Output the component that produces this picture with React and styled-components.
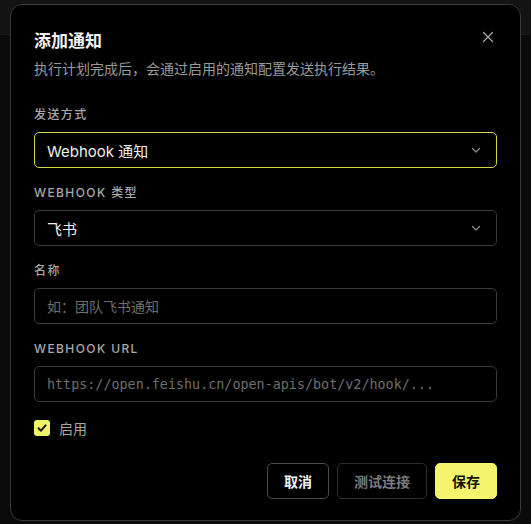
import styled, { createGlobalStyle } from 'styled-components';

const GlobalStyle = createGlobalStyle`
	html, body {
		margin: 0;
		padding: 0;
		background: #0b0b0b;
		font-family: Inter, "Noto Sans CJK SC", sans-serif;
		-webkit-font-smoothing: antialiased;
	}
	* { box-sizing: border-box; }
`;

const Page = styled.div`
	position: relative;
	width: 531px;
	height: 524px;
	overflow: hidden;
`;

const TopBar = styled.div`
	height: 35px;
	background: #131313;
	border-bottom: 1px solid #1a1a1a;
`;

const Dialog = styled.div`
	position: absolute;
	left: 10px;
	top: 4px;
	width: 511px;
	height: 517px;
	background: #000;
	border: 1px solid #3a3a3a;
	border-radius: 12px;
	padding: 23px 23px 21px;
	display: flex;
	flex-direction: column;
`;

const Header = styled.div`
	position: relative;
	margin-bottom: 28px;
`;

const Title = styled.h2`
	margin: 0;
	font-size: 17px;
	line-height: 26px;
	font-weight: 700;
	color: #f2f2f2;
`;

const Subtitle = styled.p`
	margin: 5px 0 0;
	font-size: 14px;
	line-height: 20px;
	color: #9a9a9a;
`;

const Close = styled.button`
	position: absolute;
	right: 0;
	top: 0;
	width: 18px;
	height: 18px;
	padding: 0;
	border: none;
	background: none;
	color: #a8a8a8;
	display: flex;
	align-items: center;
	justify-content: center;
`;

const Fields = styled.div`
	display: flex;
	flex-direction: column;
	gap: 17px;
`;

const Field = styled.div`
	display: flex;
	flex-direction: column;
	gap: 9px;
`;

const Label = styled.label`
	font-size: 12px;
	line-height: 16px;
	font-weight: 500;
	letter-spacing: 1.4px;
	color: #a9a9a9;
	text-transform: uppercase;
`;

const Box = styled.div`
	height: 36px;
	flex: none;
	border: 1px solid ${(p) => (p.$focused ? '#d6d645' : '#3a3a3a')};
	border-radius: 5px;
	padding: 0 14px 0 12px;
	display: flex;
	align-items: center;
	justify-content: space-between;
	font-size: ${(p) => (p.$mono ? '13.4px' : '14px')};
	font-family: ${(p) =>
		p.$mono ? '"DejaVu Sans Mono", monospace' : 'Inter, "Noto Sans CJK SC", sans-serif'};
	color: ${(p) => (p.$placeholder ? '#6e6e6e' : '#f0f0f0')};
`;

const Value = styled.span`
	font-size: 15px;
`;

const CheckRow = styled.div`
	display: flex;
	align-items: center;
	gap: 9px;
	margin-top: 16px;
	font-size: 14px;
	color: #a6a6a6;
`;

const Check = styled.span`
	width: 16px;
	height: 16px;
	border-radius: 3px;
	background: #f3f36a;
	display: flex;
	align-items: center;
	justify-content: center;
`;

const Actions = styled.div`
	margin-top: auto;
	display: flex;
	justify-content: flex-end;
	gap: 8px;
`;

const Button = styled.button`
	height: 36px;
	padding: 0 16px;
	border-radius: 5px;
	font-family: Inter, "Noto Sans CJK SC", sans-serif;
	font-size: 14px;
	font-weight: 700;
	border: 1px solid ${(p) => (p.$primary ? '#f5f56d' : p.$muted ? '#2e2e2e' : '#4a4a4a')};
	background: ${(p) => (p.$primary ? '#f5f56d' : '#000')};
	color: ${(p) => (p.$primary ? '#111' : p.$muted ? '#7a7a7a' : '#f2f2f2')};
`;

const Chevron = () => (
	<svg width="12" height="12" viewBox="0 0 12 12" fill="none" stroke="#8a8a8a" strokeWidth="1.3" strokeLinecap="round" strokeLinejoin="round">
		<path d="M2.5 4.5 6 8l3.5-3.5" />
	</svg>
);

export default function App() {
	return (
		<Page>
			<GlobalStyle />
			<TopBar />
			<Dialog>
				<Header>
					<Title>添加通知</Title>
					<Subtitle>执行计划完成后，会通过启用的通知配置发送执行结果。</Subtitle>
					<Close aria-label="关闭">
						<svg width="12" height="12" viewBox="0 0 12 12" stroke="currentColor" strokeWidth="1.3" strokeLinecap="round">
							<path d="M1.5 1.5l9 9M10.5 1.5l-9 9" />
						</svg>
					</Close>
				</Header>
				<Fields>
					<Field>
						<Label>发送方式</Label>
						<Box $focused>
							<Value>Webhook 通知</Value>
							<Chevron />
						</Box>
					</Field>
					<Field>
						<Label>Webhook 类型</Label>
						<Box>
							<Value>飞书</Value>
							<Chevron />
						</Box>
					</Field>
					<Field>
						<Label>名称</Label>
						<Box $placeholder>如：团队飞书通知</Box>
					</Field>
					<Field>
						<Label>Webhook URL</Label>
						<Box $placeholder $mono>https://open.feishu.cn/open-apis/bot/v2/hook/...</Box>
					</Field>
				</Fields>
				<CheckRow>
					<Check>
						<svg width="12" height="12" viewBox="0 0 12 12" fill="none" stroke="#1a1a1a" strokeWidth="2" strokeLinecap="round" strokeLinejoin="round">
							<path d="M2.5 6.3 5 8.7 9.6 3.3" />
						</svg>
					</Check>
					启用
				</CheckRow>
				<Actions>
					<Button>取消</Button>
					<Button $muted>测试连接</Button>
					<Button $primary>保存</Button>
				</Actions>
			</Dialog>
		</Page>
	);
}
